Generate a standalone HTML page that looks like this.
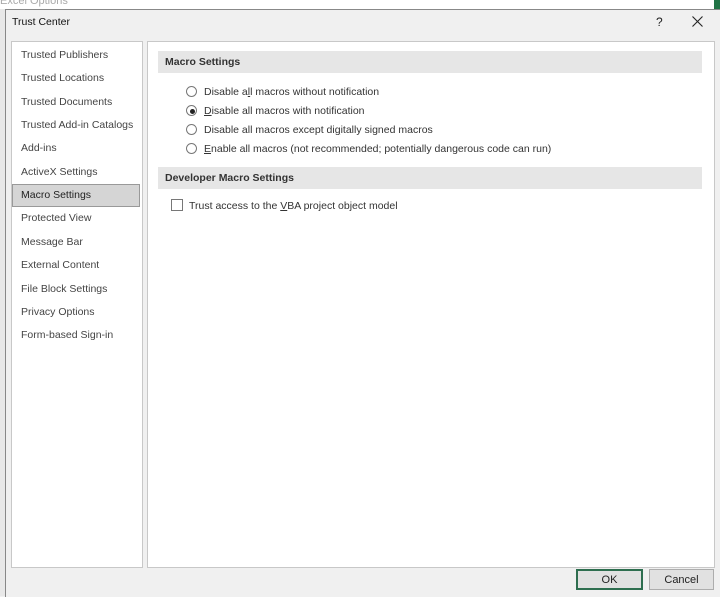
<!DOCTYPE html>
<html><head><style>
body{margin:0;width:720px;height:596px;background:#f0f0f0;position:relative;overflow:hidden;font-family:"Liberation Sans",sans-serif;font-size:10.5px;color:#333}
.a{position:absolute}
.dlg{left:5px;top:9px;width:715px;height:587px;background:#f0f0f0;border-left:1px solid #888;border-top:1px solid #888}
.li{position:absolute;left:21px;white-space:nowrap;color:#444}
.hdr{position:absolute;left:158px;width:544px;height:22px;background:#e6e6e6;font-weight:bold;color:#333;line-height:23px;text-indent:7px}
.rd{position:absolute;left:186px;width:9px;height:9px;border:1px solid #777;border-radius:50%;background:#fff}
.rt{position:absolute;left:204px;white-space:nowrap;color:#333}
.btn{position:absolute;top:569px;height:19px;line-height:20px;text-align:center;background:#e1e1e1;border:1px solid #adadad;color:#222;font-size:11px}
</style></head><body>
<div class="a" style="left:0;top:0;width:720px;height:9px;background:#fff"></div>
<div class="a" style="left:0;top:-5px;color:#aaa;font-size:11px">Excel Options</div>
<div class="a" style="left:0;top:9px;width:5px;height:587px;background:#e8e8e8"></div>
<div class="a" style="left:714px;top:0;width:6px;height:9px;background:#217346"></div>
<div class="a dlg"></div>
<div class="a" style="left:12px;top:16px;font-size:10.5px;color:#111">Trust Center</div>
<div class="a" style="left:656px;top:15px;font-size:12px;color:#222">?</div>
<svg class="a" style="left:692px;top:16px" width="11" height="11"><path d="M0.5 0.5L10.5 10.5M10.5 0.5L0.5 10.5" stroke="#222" stroke-width="1.1"/></svg>
<div class="a" style="left:11px;top:41px;width:130px;height:525px;background:#fff;border:1px solid #c8c8c8"></div>
<div class="a" style="left:147px;top:41px;width:566px;height:525px;background:#fff;border:1px solid #c8c8c8"></div>
<div class="a" style="left:12px;top:184px;width:126px;height:21px;background:#d5d5d5;border:1px solid #999"></div>
<div class="li" style="top:49px">Trusted Publishers</div>
<div class="li" style="top:72px">Trusted Locations</div>
<div class="li" style="top:96px">Trusted Documents</div>
<div class="li" style="top:119px">Trusted Add-in Catalogs</div>
<div class="li" style="top:142px">Add-ins</div>
<div class="li" style="top:166px">ActiveX Settings</div>
<div class="li" style="top:189px;color:#222">Macro Settings</div>
<div class="li" style="top:212px">Protected View</div>
<div class="li" style="top:236px">Message Bar</div>
<div class="li" style="top:259px">External Content</div>
<div class="li" style="top:283px">File Block Settings</div>
<div class="li" style="top:306px">Privacy Options</div>
<div class="li" style="top:329px">Form-based Sign-in</div>
<div class="hdr" style="top:51px">Macro Settings</div>
<div class="rd" style="top:86px"></div><div class="rt" style="top:86px">Disable a<u>l</u>l macros without notification</div>
<div class="rd" style="top:105px"></div><div class="a" style="left:190px;top:109px;width:5px;height:5px;border-radius:50%;background:#222"></div><div class="rt" style="top:105px"><u>D</u>isable all macros with notification</div>
<div class="rd" style="top:124px"></div><div class="rt" style="top:124px">Disable all macros except di<u>g</u>itally signed macros</div>
<div class="rd" style="top:143px"></div><div class="rt" style="top:143px"><u>E</u>nable all macros (not recommended; potentially dangerous code can run)</div>
<div class="hdr" style="top:167px">Developer Macro Settings</div>
<div class="a" style="left:171px;top:199px;width:10px;height:10px;border:1px solid #777;background:#fff"></div>
<div class="rt" style="left:189px;top:200px">Trust access to the <u>V</u>BA project object model</div>
<div class="btn" style="left:576px;width:63px;border:2px solid #2e6e4f;height:17px;line-height:18px">OK</div>
<div class="btn" style="left:649px;width:63px">Cancel</div>
</body></html>
